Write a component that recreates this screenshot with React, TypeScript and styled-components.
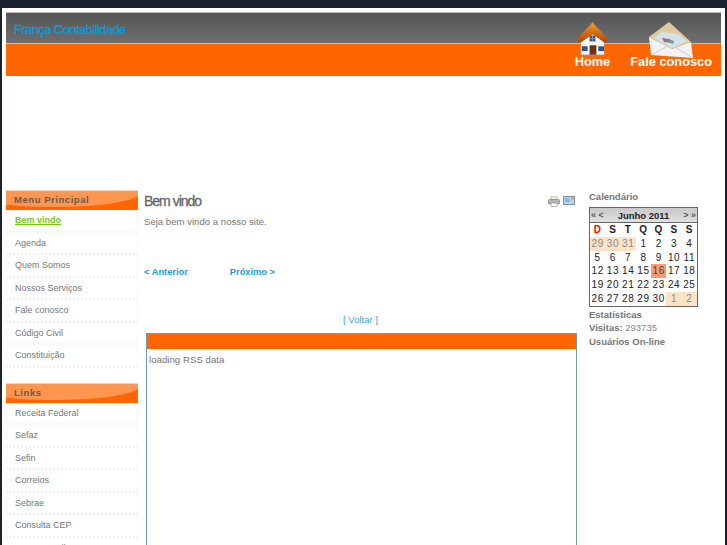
import styled, { createGlobalStyle } from 'styled-components';

const GlobalStyle = createGlobalStyle`
  html, body {
    margin: 0;
    padding: 0;
    height: 545px;
    overflow: hidden;
    background: #1a222e;
  }
  body {
    font-family: "Liberation Sans", Arial, sans-serif;
    font-size: 10px;
    color: #777;
  }
`;

const Page = styled.div`
  box-sizing: border-box;
  width: 723px;
  height: 537px;
  margin: 8px 0 0 2px;
  padding: 4px 2px 0 4px;
  background: #fff;
  overflow: hidden;
`;

const Header = styled.header`
  position: relative;
  width: 715px;
  height: 64px;
  margin-bottom: 114px;
`;

const TitleBand = styled.div`
  box-sizing: border-box;
  height: 32px;
  padding: 9px 0 0 8px;
  background: linear-gradient(#555, #6f6f6f);
  border-top: 1px solid #bbb;
  border-bottom: 1px solid #f3b184;
`;

const SiteTitle = styled.a`
  font-size: 13px;
  line-height: 15px;
  letter-spacing: -0.6px;
  -webkit-text-stroke: 0.3px #0a9ade;
  color: #0a9ade;
`;

const OrangeBand = styled.div`
  height: 32px;
  background: #ff6600;
`;

const Nav = styled.nav`
  position: absolute;
  top: 9px;
  right: 9px;
  display: flex;
  gap: 20px;
`;

const NavItem = styled.a`
  display: flex;
  flex-direction: column;
  align-items: center;
  font-size: 12.8px;
  font-weight: 700;
  line-height: 15px;
  color: #fff;

  span {
    position: relative;
  }
`;

const NavIcon = styled.svg<{ $overlap: number }>`
  display: block;
  margin-bottom: ${(p) => p.$overlap}px;
`;

const Columns = styled.div`
  display: flex;
  align-items: flex-start;
`;

const LeftColumn = styled.aside`
  display: flex;
  flex-direction: column;
  gap: 15px;
  width: 132px;
  margin-right: 6px;
`;

const Module = styled.section``;

const ModuleTitle = styled.h3`
  position: relative;
  box-sizing: border-box;
  height: 20px;
  margin: 0;
  padding: 2px 0 0 8px;
  overflow: hidden;
  background: #ff6600;
  border-top: 1px solid #f5d6c0;
  font-size: 9.6px;
  line-height: 13px;
  letter-spacing: 0.5px;
  color: #6b5a50;

  &::before {
    content: '';
    position: absolute;
    left: -40px;
    right: -2px;
    top: -24px;
    height: 40px;
    border-radius: 0 0 50% 50% / 0 0 14px 14px;
    background: #ff9650;
  }

  span {
    position: relative;
  }
`;

const MenuList = styled.ul`
  margin: 0;
  padding: 0;
  list-style: none;
`;

const MenuItem = styled.li<{ $active?: boolean }>`
  box-sizing: border-box;
  height: 22.5px;
  padding-left: 8px;
  border: 1px dotted #f2f2f2;
  border-top: 0;
  border-bottom: 2px dotted #f2f2f2;
  font-size: 9px;
  line-height: 20px;
  font-weight: ${(p) => (p.$active ? 700 : 400)};
  color: ${(p) => (p.$active ? '#7ac70c' : '#777')};
  text-decoration: ${(p) => (p.$active ? 'underline' : 'none')};
`;

const Main = styled.main`
  width: 433px;
  margin-right: 11px;
`;

const ArticleHead = styled.div`
  display: flex;
  justify-content: space-between;
  align-items: center;
  height: 21px;
  padding: 1px 2px 0 0;
  box-sizing: border-box;
`;

const ArticleTitle = styled.h2`
  margin: 0;
  font-size: 14px;
  font-weight: 400;
  letter-spacing: -1px;
  -webkit-text-stroke: 0.3px #666;
  color: #666;
`;

const ActionIcons = styled.div`
  display: flex;
  gap: 3px;
`;

const ArticleText = styled.p`
  margin: 4px 0 0;
  font-size: 9.6px;
  line-height: 13px;
`;

const Pager = styled.div`
  display: flex;
  gap: 42px;
  margin-top: 38px;
  font-size: 9.3px;
  line-height: 13px;
  font-weight: 700;
  color: #1a9ad6;
`;

const BackLink = styled.div`
  margin-top: 34px;
  text-align: center;
  font-size: 9.5px;
  line-height: 13px;
  color: #3aa6dc;
`;

const RssBox = styled.div`
  box-sizing: border-box;
  height: 260px;
  margin: 7px 0 0 2px;
  border: 1px solid #6f9fa9;
  border-bottom: 0;
`;

const RssBar = styled.div`
  height: 15px;
  background: #ff6600;
`;

const RssText = styled.div`
  padding: 4px 2px;
  font-size: 9.7px;
  line-height: 13px;
`;

const RightColumn = styled.aside`
  width: 110px;
`;

const SideHeading = styled.div`
  padding-left: 1px;
  font-size: 9.5px;
  line-height: 13px;
  font-weight: 700;
  color: #777;
`;

const Calendar = styled.div`
  box-sizing: border-box;
  width: 109px;
  margin: 4px 0 1px 1px;
  border: 1px solid #666;
  font-size: 10px;
  color: #222;
`;

const CalendarHead = styled.div`
  display: flex;
  justify-content: space-between;
  align-items: center;
  height: 14px;
  padding: 0 1px;
  background: linear-gradient(#c8c8c8, #e0e0e0);
  border-bottom: 1px solid #666;
  font-weight: 700;
  font-size: 9.5px;
`;

const CalendarNav = styled.span`
  color: #555;
  font-size: 9px;
`;

const CalendarGrid = styled.div`
  display: grid;
  grid-template-columns: repeat(7, 1fr);
  grid-auto-rows: 13.8px;
`;

type CellKind = 'week' | 'sunday' | 'other' | 'today' | 'day';

const CalendarCell = styled.div<{ $kind: CellKind }>`
  text-align: center;
  line-height: 14px;
  letter-spacing: 0.6px;
  font-weight: ${(p) => (p.$kind === 'week' || p.$kind === 'sunday' ? 700 : 400)};
  color: ${(p) =>
    p.$kind === 'sunday' ? '#f00' : p.$kind === 'other' ? '#888' : p.$kind === 'today' ? '#444' : '#222'};
  background: ${(p) =>
    p.$kind === 'other' ? '#fde3c6' : p.$kind === 'today' ? '#fb9a70' : 'transparent'};
`;

const StatLine = styled.div`
  padding-left: 1px;
  font-size: 9.5px;
  line-height: 14px;
  color: #888;

  b {
    color: #777;
  }

  &:first-of-type {
    margin-top: 1px;
  }
`;

const HouseIcon = () => (
  <NavIcon $overlap={-2} viewBox="0 0 34 36" width="33" height="35">
    <defs>
      <linearGradient id="roof" x1="0" y1="0" x2="0" y2="1">
        <stop offset="0" stopColor="#f49a2c" />
        <stop offset="1" stopColor="#b84400" />
      </linearGradient>
    </defs>
    <path d="M5 22 L17 13 L29 22 V35 H5 Z" fill="#f8f8f6" />
    <path d="M1 20 C5 12 13 7 17 1 C21 7 29 12 33 20 L30 22 L17 14 L4 22 Z" fill="url(#roof)" />
    <rect x="14" y="15" width="6" height="6" fill="#2a5a8c" />
    <path d="M17 15 V21 M14 18 H20" stroke="#9db7cf" strokeWidth="0.6" />
    <rect x="6" y="26" width="6" height="5" fill="#2a5a8c" />
    <rect x="23" y="26" width="6" height="5" fill="#2a5a8c" />
    <rect x="14" y="25" width="7" height="10" fill="#6b3410" />
    <path d="M5 35 H29" stroke="#999" strokeWidth="1" />
  </NavIcon>
);

const EnvelopeIcon = () => (
  <NavIcon $overlap={-7} viewBox="0 0 46 40" width="46" height="40">
    <path d="M1 16 L21 1 L43 21 L24 28 Z" fill="#dfcb9e" />
    <path d="M6 17 L14 11 L30 13 L39 20 L24 27 Z" fill="#d3e3ee" />
    <path d="M14 17 L22 18 L24 22 L16 21 Z" fill="#a86a7a" />
    <path d="M20 18 L26 20 L25 23 L20 21 Z" fill="#6f9f86" />
    <path d="M1 16 L24 28 L43 21 L45 37 L3 34 Z" fill="#f2f2f2" />
    <path d="M3 34 L20 25 M45 37 L27 26" stroke="#cfcfcf" strokeWidth="1" fill="none" />
  </NavIcon>
);

const PrintIcon = () => (
  <svg width="12" height="11" viewBox="0 0 12 11">
    <rect x="3" y="0" width="6" height="4" fill="#f4e9c8" stroke="#999" strokeWidth="0.6" />
    <rect x="0.5" y="3.5" width="11" height="4.5" rx="1" fill="#b5b5b5" stroke="#777" strokeWidth="0.6" />
    <rect x="3" y="7" width="6" height="3.5" fill="#fff" stroke="#888" strokeWidth="0.6" />
  </svg>
);

const MailIcon = () => (
  <svg width="12" height="9" viewBox="0 0 12 9">
    <rect x="0.5" y="0.5" width="11" height="8" fill="#b9d4ec" stroke="#7b8ea3" />
    <rect x="8" y="1.5" width="2.5" height="2" fill="#d88" />
    <path d="M2 3 H6 M2 5 H7" stroke="#6a84a0" strokeWidth="0.8" />
  </svg>
);

const mainMenu = ['Bem vindo', 'Agenda', 'Quem Somos', 'Nossos Serviços', 'Fale conosco', 'Código Civil', 'Constituição'];
const links = ['Receita Federal', 'Sefaz', 'Sefin', 'Correios', 'Sebrae', 'Consulta CEP', 'Banco Brasil'];

const weekDays = ['D', 'S', 'T', 'Q', 'Q', 'S', 'S'];
const days: [number, CellKind][] = [
  [29, 'other'], [30, 'other'], [31, 'other'],
  ...Array.from({ length: 30 }, (_, i): [number, CellKind] => [i + 1, i + 1 === 16 ? 'today' : 'day']),
  [1, 'other'], [2, 'other'],
];

export default function App(): JSX.Element {
  return (
    <Page>
      <GlobalStyle />
      <Header>
        <TitleBand>
          <SiteTitle>França Contabilidade</SiteTitle>
        </TitleBand>
        <OrangeBand />
        <Nav>
          <NavItem>
            <HouseIcon />
            <span>Home</span>
          </NavItem>
          <NavItem>
            <EnvelopeIcon />
            <span>Fale conosco</span>
          </NavItem>
        </Nav>
      </Header>

      <Columns>
        <LeftColumn>
          <Module>
            <ModuleTitle>
              <span>Menu Principal</span>
            </ModuleTitle>
            <MenuList>
              {mainMenu.map((item, i) => (
                <MenuItem key={item} $active={i === 0}>
                  {item}
                </MenuItem>
              ))}
            </MenuList>
          </Module>
          <Module>
            <ModuleTitle>
              <span>Links</span>
            </ModuleTitle>
            <MenuList>
              {links.map((item) => (
                <MenuItem key={item}>{item}</MenuItem>
              ))}
            </MenuList>
          </Module>
        </LeftColumn>

        <Main>
          <ArticleHead>
            <ArticleTitle>Bem vindo</ArticleTitle>
            <ActionIcons>
              <PrintIcon />
              <MailIcon />
            </ActionIcons>
          </ArticleHead>
          <ArticleText>Seja bem vindo a nosso site.</ArticleText>
          <Pager>
            <span>&lt; Anterior</span>
            <span>Próximo &gt;</span>
          </Pager>
          <BackLink>[ Voltar ]</BackLink>
          <RssBox>
            <RssBar />
            <RssText>loading RSS data</RssText>
          </RssBox>
        </Main>

        <RightColumn>
          <SideHeading>Calendário</SideHeading>
          <Calendar>
            <CalendarHead>
              <CalendarNav>« &lt;</CalendarNav>
              <span>Junho 2011</span>
              <CalendarNav>&gt; »</CalendarNav>
            </CalendarHead>
            <CalendarGrid>
              {weekDays.map((d, i) => (
                <CalendarCell key={i} $kind={i === 0 ? 'sunday' : 'week'}>
                  {d}
                </CalendarCell>
              ))}
              {days.map(([d, kind], i) => (
                <CalendarCell key={i} $kind={kind}>
                  {d}
                </CalendarCell>
              ))}
            </CalendarGrid>
          </Calendar>
          <SideHeading>Estatísticas</SideHeading>
          <StatLine>
            <b>Visitas:</b> 293735
          </StatLine>
          <StatLine>
            <b>Usuários On-line</b>
          </StatLine>
        </RightColumn>
      </Columns>
    </Page>
  );
}
